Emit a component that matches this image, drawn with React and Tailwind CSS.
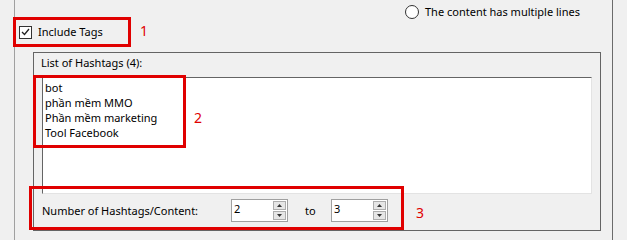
import React from "react";

const tags=["bot","phần mềm MMO","Phần mềm marketing","Tool Facebook"]

function Spin({value}){

return(
<div className="flex items-center w-[57px] h-[23px] bg-white border border-[#a0a0a0]">
<span className="flex-1 pl-[2px] leading-[14px] self-start pt-[2px]">{value}</span>
<div className="flex flex-col w-[13px] h-[19px] mr-[1px] gap-[1px]">
<div className="flex-1 flex items-center justify-center bg-[#e6e6e6] border border-[#adadad]">
<svg width="5" height="3" viewBox="0 0 5 3"><path d="M2.5 0L5 3H0z" fill="#333"/></svg>
</div>
<div className="flex-1 flex items-center justify-center bg-[#e6e6e6] border border-[#adadad]">
<svg width="5" height="3" viewBox="0 0 5 3"><path d="M0 0H5L2.5 3z" fill="#333"/></svg>
</div>
</div>
</div>
)

}

export default function App(){

return(

<div className="relative w-[627px] h-[240px] overflow-hidden bg-[#f0f0f0] text-black text-[11px] font-['Noto_Sans','Open_Sans',sans-serif]">

<div className="ml-[14px] w-[599px] h-full border-l border-[#a0a0a0] border-r border-r-[#6b6b6b] flex flex-col">

{/* radio row */}
<div className="h-[24px] flex items-start pt-[5px] pl-[390px] gap-[6px]">
<span className="w-[14px] h-[14px] rounded-full border border-[#333] bg-white"></span>
<span className="leading-[14px]">The content has multiple lines</span>
</div>

{/* include tags */}
<div className="h-[14px] mt-[1px] flex items-center pl-[4px] gap-[6px]">
<span className="w-[13px] h-[13px] border border-[#333] bg-white flex items-center justify-center">
<svg width="9" height="8" viewBox="0 0 9 8"><path d="M1 4L3.5 6.5L8 1" stroke="#222" strokeWidth="1.3" fill="none"/></svg>
</span>
<span className="leading-[14px]">Include Tags</span>
</div>

{/* group */}
<div className="ml-[18px] mt-[13px] w-[568px] h-[179px] border border-[#646464] flex flex-col">

<div className="pl-[7px] pt-[3px] leading-[14px]">List of Hashtags (4):</div>

<div className="ml-[8px] mt-[7px] w-[550px] h-[117px] bg-white border-t border-l border-t-[#646464] border-l-[#646464] border-r border-b border-r-[#e3e3e3] border-b-[#e3e3e3] pl-[2px] pt-[2px] leading-[15px]">
{tags.map(t=>(
<div key={t}>{t}</div>
))}
</div>

<div className="flex items-center h-[23px] mt-[5px] pl-[8px]">
<span className="w-[189px] leading-[14px]">Number of Hashtags/Content:</span>
<Spin value="2"/>
<span className="ml-[17px] w-[26px] leading-[14px]">to</span>
<Spin value="3"/>
</div>

</div>

</div>

{/* annotations */}
<div className="absolute left-[13px] top-[17px] w-[118px] h-[30px] border-[3px] border-[#e00000]"></div>
<span className="absolute left-[140px] top-[22px] text-[14px] leading-[18px] text-[#e00000]">1</span>

<div className="absolute left-[33px] top-[75px] w-[153px] h-[73px] border-[3px] border-[#e00000]"></div>
<span className="absolute left-[194px] top-[109px] text-[14px] leading-[18px] text-[#e00000]">2</span>

<div className="absolute left-[29px] top-[186px] w-[375px] h-[44px] border-[3px] border-[#e00000]"></div>
<span className="absolute left-[416px] top-[204px] text-[14px] leading-[18px] text-[#e00000]">3</span>

</div>

)

}
